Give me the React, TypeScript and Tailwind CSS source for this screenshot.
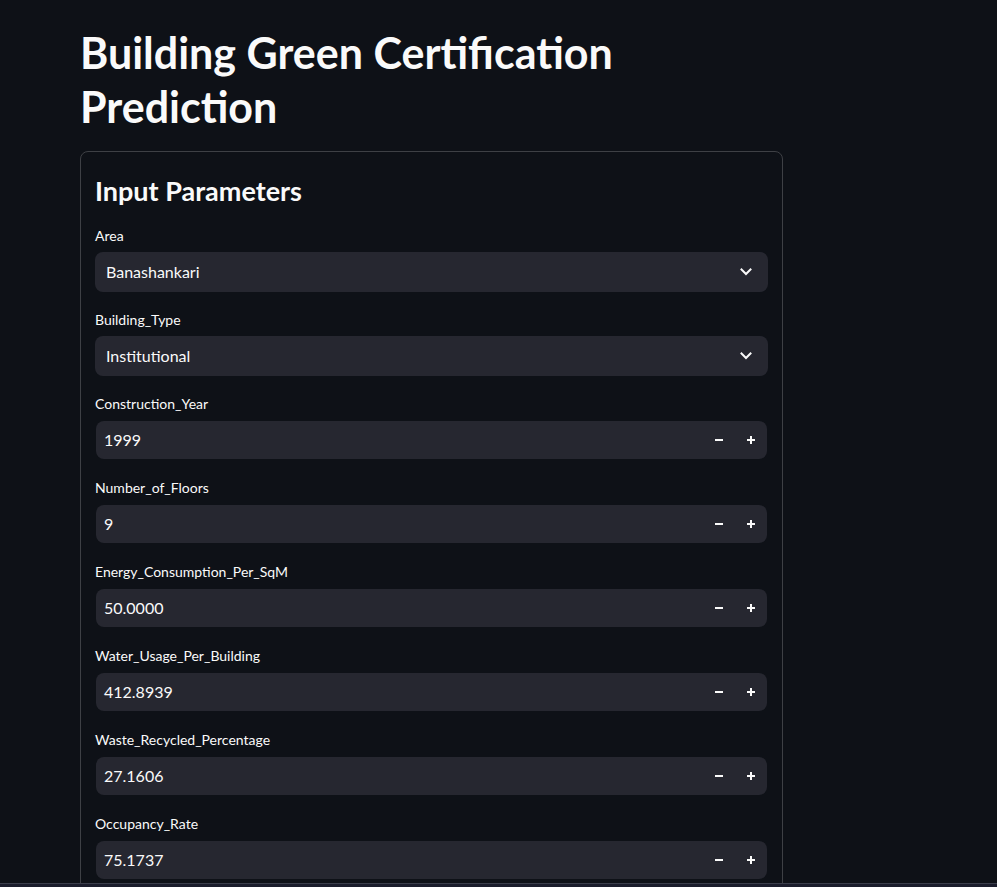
import * as React from "react";

type Field =
    | { kind: "select"; label: string; value: string }
    | { kind: "number"; label: string; value: string };

const fields: Field[] = [
    { kind: "select", label: "Area", value: "Banashankari" },
    { kind: "select", label: "Building_Type", value: "Institutional" },
    { kind: "number", label: "Construction_Year", value: "1999" },
    { kind: "number", label: "Number_of_Floors", value: "9" },
    { kind: "number", label: "Energy_Consumption_Per_SqM", value: "50.0000" },
    { kind: "number", label: "Water_Usage_Per_Building", value: "412.8939" },
    { kind: "number", label: "Waste_Recycled_Percentage", value: "27.1606" },
    { kind: "number", label: "Occupancy_Rate", value: "75.1737" },
];

function Chevron() {
    return (
        <svg width="12" height="8" viewBox="0 0 12 8" fill="none">
            <path d="M1.5 1.5 6 6l4.5-4.5" stroke="#fafafa" strokeWidth="2" strokeLinecap="square" />
        </svg>
    );
}

function SelectBox({ value }: { value: string }) {
    return (
        <div className="flex h-10 items-center justify-between rounded-lg bg-[#262730] pl-[11px] pr-[16px]">
            <span className="text-base">{value}</span>
            <Chevron />
        </div>
    );
}

function NumberBox({ value }: { value: string }) {
    return (
        <div className="h-10 p-px">
            <div className="flex h-full items-center rounded-lg bg-[#262730]">
                <span className="flex-1 pl-2 text-base">{value}</span>
                <button className="flex h-full w-8 items-center justify-center">
                    <span className="block h-[2px] w-2 bg-[#fafafa]" />
                </button>
                <button className="flex h-full w-8 items-center justify-center">
                    <svg width="8" height="8" viewBox="0 0 8 8">
                        <rect x="0" y="3" width="8" height="2" fill="#fafafa" />
                        <rect x="3" y="0" width="2" height="8" fill="#fafafa" />
                    </svg>
                </button>
            </div>
        </div>
    );
}

export default function App() {
    return (
        <div
            className="min-h-screen bg-[#0e1117] text-[#fafafa]"
            style={{ fontFamily: "Lato, 'Noto Sans', sans-serif" }}
        >
            <div className="ml-[80px] w-[703px] pt-[26px]">
                <h1 className="text-[43px] font-bold leading-[54px]">
                    Building Green Certification Prediction
                </h1>
                <div className="mt-[17px] rounded-lg border border-[#3e4045] px-[14px] pb-[14px] pt-[21px]">
                    <h2 className="mb-[15px] text-[27px] font-bold leading-[36px]">Input Parameters</h2>
                    <div className="flex flex-col gap-4">
                        {fields.map((f) => (
                            <div key={f.label}>
                                <div className="mb-1 flex h-6 items-center text-sm">{f.label}</div>
                                {f.kind === "select" ? (
                                    <SelectBox value={f.value} />
                                ) : (
                                    <NumberBox value={f.value} />
                                )}
                            </div>
                        ))}
                    </div>
                </div>
            </div>
            <div className="fixed bottom-0 left-0 h-[4px] w-full border-t border-[#3b3e4b] bg-[#1b1d2c]" />
        </div>
    );
}
